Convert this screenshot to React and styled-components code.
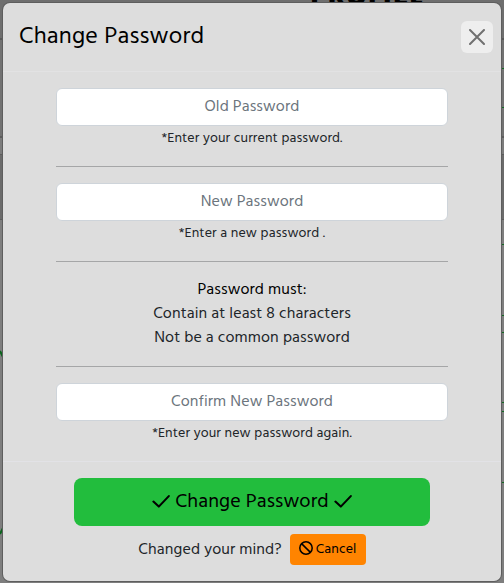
import React from "react";
import styled, { createGlobalStyle } from "styled-components";

const GlobalStyle = createGlobalStyle`
  * { box-sizing: border-box; }
  body { margin: 0; font-family: Hind, "Noto Sans", sans-serif; font-size: 16px; line-height: 24px; letter-spacing: 0.11px; color: #212529; }
`;

const Page = styled.div`
  position: relative;
  width: 504px;
  height: 583px;
  padding: 3px 3px 2px;
  overflow: hidden;
  background: linear-gradient(#6e6e6e 0 38px, #595959 38px 40px, #727272 40px 136px, #5c5c5c 136px 138px, #7c7c7c 138px 154px, #5c5c5c 154px 155px, #6b6b6b 155px 219px, #5c5c5c 219px 220px, #7e7e7e 220px);
`;

const Backdrop = styled.svg`
  position: absolute;
  inset: 0;
`;

const PageTitle = styled.div`
  position: absolute;
  left: 310px;
  top: -18px;
  font-family: "Open Sans", sans-serif;
  font-size: 26px;
  font-weight: 800;
  line-height: 26px;
  letter-spacing: 1px;
  color: #000;
`;

const Dialog = styled.section`
  position: relative;
  height: 578px;
  display: flex;
  flex-direction: column;
  background: #ddd;
  border-radius: 7px;
  box-shadow: 0 0 0 1px #5e5e5e;
  overflow: hidden;
`;

const Header = styled.header`
  display: flex;
  justify-content: space-between;
  height: 69px;
  padding: 18px 8px 0 16px;
  border-bottom: 1px solid #e2e2e3;
`;

const Title = styled.h1`
  margin: 0;
  font-size: 24px;
  font-weight: 400;
  line-height: 32px;
  letter-spacing: 0.2px;
  color: #000;
`;

const Close = styled.button`
  display: grid;
  place-items: center;
  width: 32px;
  height: 32px;
  padding: 0;
  border: 0;
  border-radius: 6px;
  background: #eee;
`;

const Body = styled.div`
  display: flex;
  flex-direction: column;
  height: 389px;
  padding: 16px 53px 0;
  text-align: center;
`;

const Field = styled.input`
  display: block;
  width: 392px;
  height: 38px;
  margin: 0;
  padding: 0 12px;
  border: 1px solid #ced4da;
  border-radius: 6px;
  background: #fff;
  font: inherit;
  letter-spacing: inherit;
  text-align: center;
  &::placeholder { color: #6c757d; opacity: 1; }
`;

const Hint = styled.div`
  height: 24px;
  font-size: 14px;
  line-height: 26px;
`;

const Rule = styled.hr`
  width: 100%;
  height: 1px;
  margin: 16px 0;
  border: 0;
  background: #a5a6a7;
`;

const Line = styled.div`
  height: 24px;
  line-height: 24px;
  color: ${(p) => (p.$strong ? "#000" : "#212529")};
`;

const Footer = styled.footer`
  display: flex;
  flex-direction: column;
  align-items: center;
  gap: 8px;
  flex: 1;
  padding-top: 16px;
  border-top: 1px solid #e2e2e6;
`;

const Button = styled.button`
  display: flex;
  align-items: center;
  justify-content: center;
  padding: 0;
  border: 0;
  color: #000;
  font: inherit;
  letter-spacing: inherit;
  svg { margin-bottom: 3px; }
`;

const Submit = styled(Button)`
  gap: 5px;
  width: 356px;
  height: 48px;
  border-radius: 8px;
  background: #22bd3d;
  font-size: 20px;
`;

const CancelRow = styled.div`
  display: flex;
  align-items: center;
  gap: 8px;
`;

const Cancel = styled(Button)`
  gap: 3px;
  width: 76px;
  height: 31px;
  border-radius: 4px;
  background: #ff8400;
  font-size: 14px;
`;

const Check = () => (
  <svg width="18" height="14" viewBox="0 0 18 14" fill="none" stroke="#000" strokeWidth="2.1" strokeLinecap="round" strokeLinejoin="round">
    <path d="M1.4 7.6L6.8 12.6L16.8 2.1" />
  </svg>
);

const Ban = () => (
  <svg width="14" height="14" viewBox="0 0 14 14" fill="none" stroke="#000" strokeWidth="1.5">
    <circle cx="7" cy="7" r="6.2" />
    <path d="M2.6 2.6L11.4 11.4" />
  </svg>
);

const greenMarks = [68, 107, 244, 315, 332, 402, 411, 482];

export default function App() {
  return (
    <>
      <GlobalStyle />
      <Page>
        <PageTitle>PROFILE</PageTitle>
        <Backdrop width="504" height="583">
          <path d="M0 351 L5 361 M0 534 L5 524" stroke="#08641a" strokeWidth="2" />
          {greenMarks.map((y) => (
            <path key={y} d={`M500 ${y + 0.5}H504`} stroke="#126b22" />
          ))}
        </Backdrop>
        <Dialog>
          <Header>
            <Title>Change Password</Title>
            <Close aria-label="Close">
              <svg width="16" height="16" viewBox="0 0 16 16" stroke="#707070" strokeWidth="2" strokeLinecap="round">
                <path d="M1 1L15 15M15 1L1 15" />
              </svg>
            </Close>
          </Header>
          <Body>
            <Field placeholder="Old Password" />
            <Hint>*Enter your current password.</Hint>
            <Rule />
            <Field placeholder="New Password" />
            <Hint>*Enter a new password .</Hint>
            <Rule />
            <Line $strong>Password must:</Line>
            <Line>Contain at least 8 characters</Line>
            <Line>Not be a common password</Line>
            <Rule />
            <Field placeholder="Confirm New Password" />
            <Hint>*Enter your new password again.</Hint>
          </Body>
          <Footer>
            <Submit><Check />Change Password<Check /></Submit>
            <CancelRow>
              <span>Changed your mind?</span>
              <Cancel><Ban />Cancel</Cancel>
            </CancelRow>
          </Footer>
        </Dialog>
      </Page>
    </>
  );
}
